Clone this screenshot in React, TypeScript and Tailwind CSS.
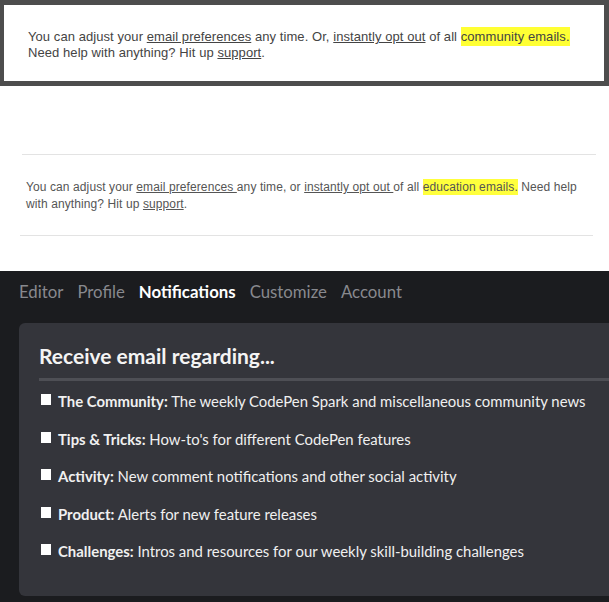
import React from 'react'

const TABS = [
  { label: 'Editor', active: false },
  { label: 'Profile', active: false },
  { label: 'Notifications', active: true },
  { label: 'Customize', active: false },
  { label: 'Account', active: false },
]

const OPTIONS = [
  { title: 'The Community:', text: 'The weekly CodePen Spark and miscellaneous community news' },
  { title: 'Tips & Tricks:', text: "How-to's for different CodePen features" },
  { title: 'Activity:', text: 'New comment notifications and other social activity' },
  { title: 'Product:', text: 'Alerts for new feature releases' },
  { title: 'Challenges:', text: 'Intros and resources for our weekly skill-building challenges' },
]

function CommunityFooter() {
  return (
    <div className="border-[#4d4d4d] border-l-[4px] border-r-[5px] border-t-[5px] border-b-[5px] bg-white pl-6 pt-6 pb-5">
      <p
        className="text-[13px] leading-4 tracking-[0.07px] text-[#444]"
        style={{ fontFamily: '"Liberation Sans", Arial, sans-serif' }}
      >
        You can adjust your <a className="underline">email preferences</a> any time. Or,{' '}
        <a className="underline">instantly opt out</a> of all{' '}
        <span className="bg-[#ffff33] py-[2px]">community emails.</span>
        <br />
        Need help with anything? Hit up <a className="underline">support</a>.
      </p>
    </div>
  )
}

function EducationFooter() {
  return (
    <div className="pt-[68px] pb-[35px]">
      <div className="ml-[22px] mr-[13px] border-t border-[#e3e3e3]" />
      <p
        className="ml-[26px] mr-[20px] pt-[24px] pb-[22px] text-[12px] leading-[17px] tracking-[0.1px] text-[#555]"
        style={{ fontFamily: '"Liberation Sans", Arial, sans-serif' }}
      >
        You can adjust your <a className="underline">email preferences </a>any time, or{' '}
        <a className="underline">instantly opt out </a>of all{' '}
        <span className="bg-[#ffff3c] py-[1px]">education emails.</span> Need help with anything? Hit up{' '}
        <a className="underline">support</a>.
      </p>
      <div className="ml-[20px] mr-[16px] border-t border-[#e3e3e3]" />
    </div>
  )
}

function Settings() {
  return (
    <div className="bg-[#1b1c1f] h-[332px] overflow-hidden pt-[9px]" style={{ fontFamily: 'Lato, "Open Sans", sans-serif' }}>
      <nav className="flex gap-[14px] pl-[19px] text-[16.8px] leading-6">
        {TABS.map((t) => (
          <span key={t.label} className={t.active ? 'font-bold text-white' : 'text-[#88898e]'}>
            {t.label}
          </span>
        ))}
      </nav>
      <div className="ml-[19px] mr-[-20px] mt-[19px] rounded-md bg-[#34353b] pl-5 pt-[19px] pb-[34px]">
        <h2 className="text-[21px] font-bold leading-7 text-[#f4f4f4]">Receive email regarding...</h2>
        <div className="mt-2 h-[3px] bg-[#4e4f55]" />
        <ul className="mt-[9px] flex flex-col gap-[15.5px]">
          {OPTIONS.map((o) => (
            <li key={o.title} className="flex items-start text-[14.9px] leading-[22px] text-[#f0f0f0]">
              <span className="ml-[2px] mt-[4px] mr-[7px] h-[11px] w-[10px] shrink-0 bg-white" />
              <span>
                <b className="font-bold">{o.title}</b> {o.text}
              </span>
            </li>
          ))}
        </ul>
      </div>
    </div>
  )
}

export default function App() {
  return (
    <div className="w-[609px] h-[602px] overflow-hidden bg-white">
      <CommunityFooter />
      <EducationFooter />
      <Settings />
    </div>
  )
}
